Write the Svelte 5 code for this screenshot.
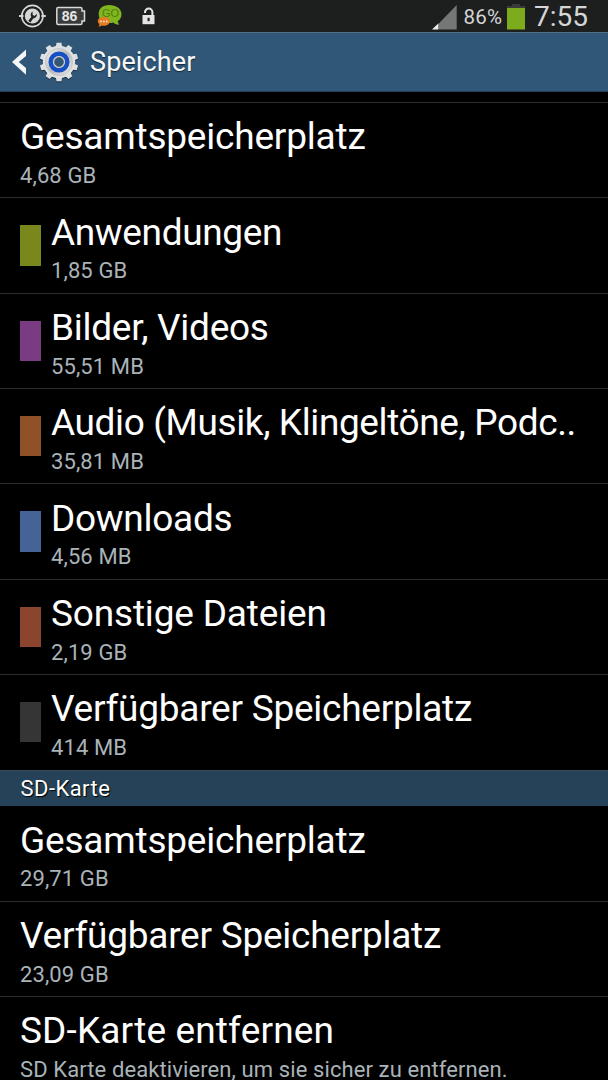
<script>
  const storage = [
    { title: 'Gesamtspeicherplatz', detail: '4,68 GB', track: -0.2 },
    { title: 'Anwendungen', detail: '1,85 GB', color: '#7a871c', track: -0.36 },
    { title: 'Bilder, Videos', detail: '55,51 MB', color: '#7b3b82', track: -0.28 },
    { title: 'Audio (Musik, Klingeltöne, Podc..', detail: '35,81 MB', color: '#915127', track: -0.38 },
    { title: 'Downloads', detail: '4,56 MB', color: '#466397', track: -0.28 },
    { title: 'Sonstige Dateien', detail: '2,19 GB', color: '#8b452e', track: -0.17 },
    { title: 'Verfügbarer Speicherplatz', detail: '414 MB', color: '#343534', track: -0.25 }
  ];
  const card = [
    { title: 'Gesamtspeicherplatz', detail: '29,71 GB', track: -0.2 },
    { title: 'Verfügbarer Speicherplatz', detail: '23,09 GB', track: -0.25 },
    { title: 'SD-Karte entfernen', detail: 'SD Karte deaktivieren, um sie sicher zu entfernen.', track: 0.15 }
  ];
  const teeth = Array.from({ length: 10 }, (_, i) => i * 36);
</script>

{#snippet row(item)}
  <li class="row">
    {#if item.color}<span class="swatch" style="background:{item.color}"></span>{/if}
    <div class="copy">
      <div class="title" style="letter-spacing:{item.track}px">{item.title}</div>
      <div class="detail">{item.detail}</div>
    </div>
  </li>
{/snippet}

<main class="screen">
  <div class="status">
    <svg class="left" width="170" height="32" viewBox="0 0 170 32">
      <g fill="none" stroke="#d6d6d6">
        <circle cx="32.400" cy="16" r="10.600" stroke-width="1.700" />
        <path d="M19 16h4.500M41.300 16h4.500" stroke-width="2.200" />
      </g>
      <circle cx="32.400" cy="16" r="7.600" fill="#d6d6d6" />
      <path d="M28.300 20.800l3-3.800a3.900 3.900 0 0 1 1.300-5.500v3.300l1.900 1.200 2.300-2.300a3.900 3.900 0 0 1-3.600 4.700l-2.800 4.200z" fill="#222424" />
      <path d="M58 7.500h22.500q1.500 0 1.500 1.500v2h2.500v10H82v2q0 1.500-1.500 1.500H58q-1.200 0-1.200-1.500V9q0-1.500 1.200-1.500z" fill="#3a3c3c" stroke="#d9d9d9" stroke-width="1.500" />
      <text class="gauge" x="69.500" y="21" text-anchor="middle" font-size="14" font-weight="700" fill="#e6e6e6">86</text>
      <path d="M109 5c7 0 12.500 3.600 12.500 9.200 0 3.200-1.400 5.400-3.800 6.900.1 1.600.9 2.600 1.700 3.700-2.600 0-4.700-.7-6-2.200-1.600.4-3 .5-4.400.5-7 0-10.300-3.600-10.300-9C98.700 8.600 102.500 5 109 5z" fill="#80b51e" />
      <text class="gauge" x="110.500" y="17" text-anchor="middle" font-size="11" fill="#4f8010">GO</text>
      <path d="M104.200 17c3.500 0 5.600 1.800 5.600 4.200 0 2.700-2.500 4.500-6 4.500-.8 0-1.500-.1-2-.3-1 .9-2 1.200-3.300 1.100.6-.8.9-1.500.8-2.400-1-.8-1.500-1.800-1.500-3 0-2.400 2.500-4.100 6.400-4.100z" fill="#e47c24" />
      <g fill="#f7e3d0"><circle cx="101" cy="21.400" r=".9" /><circle cx="103.900" cy="21.400" r=".9" /><circle cx="106.800" cy="21.400" r=".9" /></g>
      <path d="M145 13v-.700a3.700 3.700 0 0 1 7.400 0V16" fill="none" stroke="#e4e4e4" stroke-width="2" />
      <path d="M142.500 15h12v9.200h-12z" fill="#e4e4e4" />
      <path d="M147.500 17.800h2.200v3.400h-2.200z" fill="#252828" />
    </svg>
    <svg class="right" width="188" height="32" viewBox="420 0 188 32">
      <path d="M439 23.300L456.700 5v24.500H439z" fill="#747777" />
      <path d="M432 29.500l6.500-6.300v6.300z" fill="#eeeeee" />
      <text x="463.500" y="24" font-size="20.500" fill="#d4d4d4" textLength="38.500">86%</text>
      <path d="M512 4h8v2h5v3h-18V6h5z" fill="#393b39" />
      <path d="M507 8h18v21.500h-18z" fill="#7cab1c" />
      <text x="534" y="26" font-size="28" fill="#d6d6d6" textLength="54">7:55</text>
    </svg>
  </div>

  <header class="bar">
    <svg class="chevron" width="80" height="60" viewBox="0 0 80 60">
      <path d="M12 30L26 17.500V24L18.800 30 26 36v6.800z" fill="#f4f6f8" />
      <defs>
        <linearGradient id="metal" x1="0" y1="0" x2="1" y2="1">
          <stop offset="0" stop-color="#f7f7f7" />
          <stop offset=".5" stop-color="#b4b7b9" />
          <stop offset="1" stop-color="#efefef" />
        </linearGradient>
      </defs>
      <g transform="translate(59 31)" fill="#1b2f42">
        {#each teeth as angle}
          <path d="M-3.300-14l.8-5.300h5l.8 5.300z" transform="rotate({angle})" />
        {/each}
        <circle r="16.300" />
      </g>
      <g transform="translate(59 30)">
        {#each teeth as angle}
          <path d="M-3.300-14l.8-5.300h5l.8 5.300z" fill="#dddfe0" transform="rotate({angle})" />
        {/each}
        <circle r="16.200" fill="#dfe1e2" />
        <circle r="13.500" fill="url(#metal)" stroke="#c3c6c8" />
        <circle r="8.200" fill="#b5b9bd" stroke="#1650c4" stroke-width="4.600" />
        <circle r="5.300" fill="#315777" stroke="#c9cdd0" stroke-width="1.600" />
        <circle r="4.500" fill="none" stroke="#4a545c" stroke-width=".6" />
      </g>
    </svg>
    <h1>Speicher</h1>
  </header>

  <div class="lead"></div>
  <ul>{#each storage as item}{@render row(item)}{/each}</ul>
  <h2>SD-Karte</h2>
  <ul>{#each card as item}{@render row(item)}{/each}</ul>
</main>

<style>
  :global(body) { background: #000; overflow: hidden; }
  .screen {
    width: 608px; height: 1080px; overflow: hidden;
    background: #000; color: #fff;
    font-family: Roboto, sans-serif;
  }
  .status { display: flex; justify-content: space-between; height: 32px; background: #1d1f1f; }
  svg { display: block; font-family: Roboto, sans-serif; }
  .gauge { font-family: "Liberation Sans", sans-serif; }
  .bar {
    box-sizing: border-box; height: 60px; display: flex; align-items: center;
    background: #305777; border-top: 1px solid #50708a; border-bottom: 1px solid #223f57;
  }
  h1 {
    margin: 0 0 0 10px; font-size: 27px; line-height: 58px; font-weight: 400;
    letter-spacing: 0.12px; color: #f7f7f7; text-shadow: 0 1px 1px #14283a;
  }
  .lead { height: 10px; border-bottom: 1px solid #2c2d2d; }
  ul { list-style: none; margin: 0; padding: 0; }
  .row {
    box-sizing: border-box; height: 95.33px; padding: 0 20.500px 0 20px;
    display: flex; gap: 10.5px; border-bottom: 1px solid #2c2d2d;
  }
  .row:last-child { border-bottom: 0; }
  .swatch { flex: none; width: 20.500px; height: 40.500px; margin-top: 27px; }
  .copy { white-space: nowrap; padding-top: 12.400px; }
  .title { font-size: 37px; line-height: 44px; }
  .detail { font-size: 22px; line-height: 30px; padding-top: 1.700px; letter-spacing: 0.1px; color: #a9b3b8; }
  h2 {
    box-sizing: border-box; height: 35.500px; margin: 0 0 0.600px; padding-left: 20.500px;
    background: #264258; border-top: 1px solid #344b58; letter-spacing: 0.45px;
    font-size: 22px; line-height: 36px; font-weight: 400; text-shadow: 1px 1px 1px #000;
  }
</style>
